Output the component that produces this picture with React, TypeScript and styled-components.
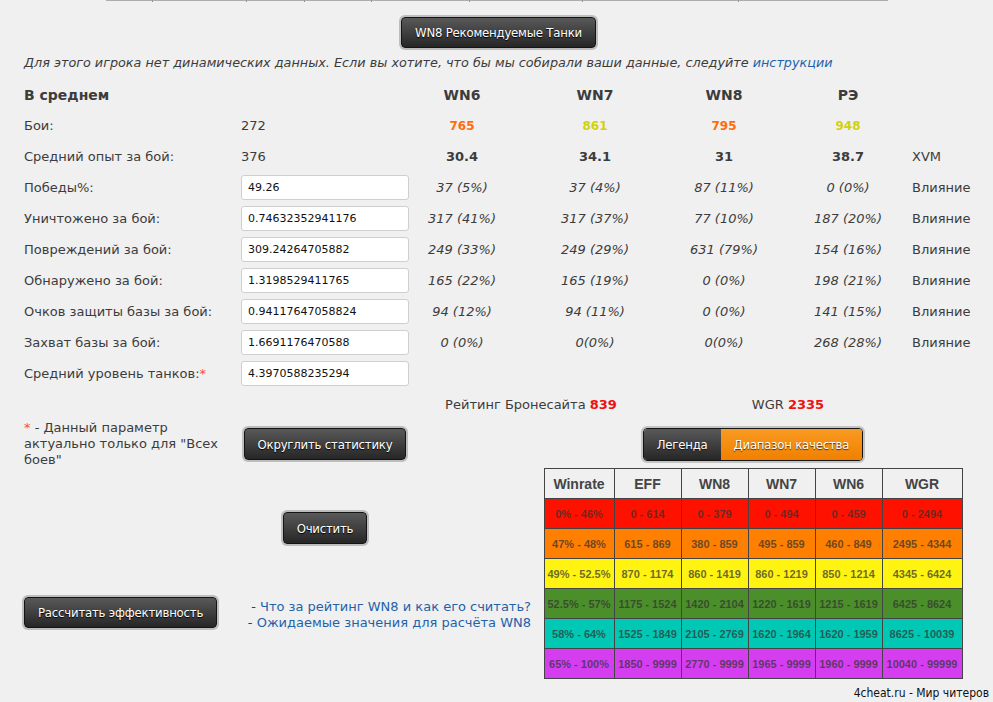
import styled, { createGlobalStyle } from "styled-components";

const GlobalStyle = createGlobalStyle`
  html, body {
    margin: 0;
    background: #f0f0f0;
  }
  body {
    font-family: "DejaVu Sans", Verdana, sans-serif;
    font-size: 13px;
    color: #3c3c3c;
  }
  * {
    box-sizing: border-box;
  }
`;

const tabEdges = [106, 153, 247, 305, 372, 470, 583, 739, 888];

const headers = ["WN6", "WN7", "WN8", "РЭ"];
const battles = [
  { value: "765", color: "#ff6c0a" },
  { value: "861", color: "#d2d20c" },
  { value: "795", color: "#ff6c0a" },
  { value: "948", color: "#d2d20c" },
];
const averages = ["30.4", "34.1", "31", "38.7"];

const rows = [
  { label: "Победы%:", value: "49.26", cells: ["37 (5%)", "37 (4%)", "87 (11%)", "0 (0%)"] },
  { label: "Уничтожено за бой:", value: "0.74632352941176", cells: ["317 (41%)", "317 (37%)", "77 (10%)", "187 (20%)"] },
  { label: "Повреждений за бой:", value: "309.24264705882", cells: ["249 (33%)", "249 (29%)", "631 (79%)", "154 (16%)"] },
  { label: "Обнаружено за бой:", value: "1.3198529411765", cells: ["165 (22%)", "165 (19%)", "0 (0%)", "198 (21%)"] },
  { label: "Очков защиты базы за бой:", value: "0.94117647058824", cells: ["94 (12%)", "94 (11%)", "0 (0%)", "141 (15%)"] },
  { label: "Захват базы за бой:", value: "1.6691176470588", cells: ["0 (0%)", "0(0%)", "0(0%)", "268 (28%)"] },
];

const legendHead = ["Winrate", "EFF", "WN8", "WN7", "WN6", "WGR"];
const legendRows = [
  { color: "#ff1100", cells: ["0% - 46%", "0 - 614", "0 - 379", "0 - 494", "0 - 459", "0 - 2494"] },
  { color: "#ff7f00", cells: ["47% - 48%", "615 - 869", "380 - 859", "495 - 859", "460 - 849", "2495 - 4344"] },
  { color: "#fff312", cells: ["49% - 52.5%", "870 - 1174", "860 - 1419", "860 - 1219", "850 - 1214", "4345 - 6424"] },
  { color: "#4b8f2a", cells: ["52.5% - 57%", "1175 - 1524", "1420 - 2104", "1220 - 1619", "1215 - 1619", "6425 - 8624"] },
  { color: "#00c8b4", cells: ["58% - 64%", "1525 - 1849", "2105 - 2769", "1620 - 1964", "1620 - 1959", "8625 - 10039"] },
  { color: "#d53ef0", cells: ["65% - 100%", "1850 - 9999", "2770 - 9999", "1965 - 9999", "1960 - 9999", "10040 - 99999"] },
];
const legendWidths = [70, 67, 67, 67, 67, 80];

export default function App() {
  return (
    <>
      <GlobalStyle />
      <Page>
        <TopRule>
          {tabEdges.slice(1).map((edge, i) => (
            <TabEdge key={edge} style={{ width: edge - tabEdges[i] }} />
          ))}
        </TopRule>

        <CenterRow>
          <DarkButton>WN8 Рекомендуемые Танки</DarkButton>
        </CenterRow>

        <Notice>
          Для этого игрока нет динамических данных. Если вы хотите, что бы мы собирали ваши данные, следуйте{" "}
          <Link>инструкции</Link>
        </Notice>

        <StatsGrid>
          <HeadLabel>В среднем</HeadLabel>
          <span />
          {headers.map((h) => (
            <HeadCell key={h}>{h}</HeadCell>
          ))}
          <span />

          <Label>Бои:</Label>
          <Plain>272</Plain>
          {battles.map((b) => (
            <RatingCell key={b.value} $color={b.color}>
              {b.value}
            </RatingCell>
          ))}
          <span />

          <Label>Средний опыт за бой:</Label>
          <Plain>376</Plain>
          {averages.map((a) => (
            <BoldCell key={a}>{a}</BoldCell>
          ))}
          <Plain>XVM</Plain>

          {rows.map((row) => (
            <Row key={row.label}>
              <Label>{row.label}</Label>
              <ValueInput defaultValue={row.value} />
              {row.cells.map((c, i) => (
                <ItalicCell key={i}>{c}</ItalicCell>
              ))}
              <Plain>Влияние</Plain>
            </Row>
          ))}

          <Label>
            Средний уровень танков:<Star>*</Star>
          </Label>
          <ValueInput defaultValue="4.3970588235294" />
          <Filler />

          <SiteRating $col={3}>
            Рейтинг Бронесайта <Red>839</Red>
          </SiteRating>
          <SiteRating $col={5}>
            WGR <Red>2335</Red>
          </SiteRating>
        </StatsGrid>

        <Bottom>
          <LeftColumn>
            <FootRow>
              <FootNote>
                <Star>*</Star> - Данный параметр актуально только для "Всех боев"
              </FootNote>
              <RoundSlot>
                <DarkButton>Округлить статистику</DarkButton>
                <ClearSlot>
                  <DarkButton>Очистить</DarkButton>
                </ClearSlot>
              </RoundSlot>
            </FootRow>
            <CalcRow>
              <DarkButton>Рассчитать эффективность</DarkButton>
              <Links>
                <div>
                  - <Link>Что за рейтинг WN8 и как его считать?</Link>
                </div>
                <div>
                  - <Link>Ожидаемые значения для расчёта WN8</Link>
                </div>
              </Links>
            </CalcRow>
          </LeftColumn>

          <RightColumn>
            <Toggle>
              <ToggleItem>Легенда</ToggleItem>
              <ToggleItem $active>Диапазон качества</ToggleItem>
            </Toggle>
            <Legend>
              <colgroup>
                {legendWidths.map((w, i) => (
                  <col key={i} style={{ width: w }} />
                ))}
              </colgroup>
              <thead>
                <tr>
                  {legendHead.map((h) => (
                    <LegendHead key={h}>{h}</LegendHead>
                  ))}
                </tr>
              </thead>
              <tbody>
                {legendRows.map((r) => (
                  <tr key={r.color}>
                    {r.cells.map((c) => (
                      <LegendCell key={c} $bg={r.color}>
                        {c}
                      </LegendCell>
                    ))}
                  </tr>
                ))}
              </tbody>
            </Legend>
          </RightColumn>
        </Bottom>

        <Watermark>4cheat.ru - Мир читеров</Watermark>
      </Page>
    </>
  );
}

const Page = styled.div`
  position: relative;
  width: 993px;
  height: 702px;
  overflow: hidden;
`;

const TopRule = styled.div`
  display: flex;
  padding-left: 106px;
  height: 2px;
`;

const TabEdge = styled.div`
  height: 2px;
  border-top: 1px solid #adadad;
  border-right: 1px solid #8e8e8e;
  &:last-child {
    border-right: none;
  }
`;

const CenterRow = styled.div`
  display: flex;
  justify-content: center;
  padding-left: 4px;
  margin-top: 15px;
`;

const DarkButton = styled.button`
  height: 31px;
  padding: 0 13px;
  border: 1px solid #141414;
  border-radius: 4px;
  background: linear-gradient(#595959, #262626);
  box-shadow: 0 0 0 2px #bdbdbd;
  color: #fff;
  font-family: "DejaVu Sans Condensed", "Liberation Sans Narrow", sans-serif;
  font-size: 13px;
  letter-spacing: -0.2px;
  text-shadow: 0 1px 1px #000;
  white-space: nowrap;
  cursor: pointer;
`;

const Notice = styled.p`
  margin: 7px 0 0 24px;
  font-size: 12.8px;
  font-style: italic;
  line-height: 16px;
`;

const Link = styled.a`
  color: #1f62aa;
  text-decoration: none;
  cursor: pointer;
`;

const StatsGrid = styled.div`
  display: grid;
  grid-template-columns: 217px 157px 128px 138px 120px 128px 1fr;
  grid-auto-rows: 31px;
  align-items: center;
  margin-top: 8px;
  padding-left: 24px;
`;

const Row = styled.div`
  display: contents;
`;

const HeadLabel = styled.div`
  font-size: 14px;
  font-weight: bold;
`;

const HeadCell = styled.div`
  text-align: center;
  font-size: 14px;
  font-weight: bold;
`;

const Label = styled.div`
  white-space: nowrap;
`;

const Plain = styled.div``;

const RatingCell = styled.div<{ $color: string }>`
  text-align: center;
  font-size: 12px;
  font-weight: bold;
  color: ${(p) => p.$color};
`;

const BoldCell = styled.div`
  text-align: center;
  font-size: 13px;
  font-weight: bold;
`;

const ItalicCell = styled.div`
  text-align: center;
  font-style: italic;
`;

const ValueInput = styled.input`
  width: 168px;
  height: 25px;
  padding: 0 6px;
  border: 1px solid #cfcfcf;
  border-radius: 3px;
  background: #fff;
  font-family: "DejaVu Sans", Verdana, sans-serif;
  font-size: 11px;
  color: #111;
`;

const Filler = styled.div`
  grid-column: 3 / -1;
`;

const Star = styled.span`
  color: #ff4a4a;
`;

const SiteRating = styled.div<{ $col: number }>`
  grid-column: ${(p) => p.$col} / span 2;
  text-align: center;
`;

const Red = styled.b`
  color: #ee1111;
`;

const Bottom = styled.div`
  display: flex;
  gap: 13px;
  padding-left: 24px;
`;

const LeftColumn = styled.div`
  width: 507px;
  display: flex;
  flex-direction: column;
`;

const FootRow = styled.div`
  display: grid;
  grid-template-columns: 219px auto;
  align-items: start;
`;

const FootNote = styled.div`
  width: 205px;
  line-height: 16px;
`;

const RoundSlot = styled.div`
  display: flex;
  flex-direction: column;
  align-items: center;
  width: 164px;
  padding-top: 8px;
  ${DarkButton} {
    height: 32px;
  }
`;

const ClearSlot = styled.div`
  margin-top: 52px;
`;

const CalcRow = styled.div`
  display: flex;
  justify-content: space-between;
  align-items: flex-start;
  margin-top: 53px;
`;

const Links = styled.div`
  text-align: right;
  line-height: 16px;
  padding-top: 2px;
`;

const RightColumn = styled.div`
  width: 418px;
  display: flex;
  flex-direction: column;
  align-items: center;
`;

const Toggle = styled.div`
  display: flex;
  margin-top: 8px;
  border: 1px solid #141414;
  border-radius: 4px;
  box-shadow: 0 0 0 2px #c4c4c4;
  overflow: hidden;
`;

const ToggleItem = styled.div<{ $active?: boolean }>`
  height: 31px;
  display: flex;
  align-items: center;
  padding: 0 13px;
  background: ${(p) =>
    p.$active ? "linear-gradient(#f99a22, #f08000)" : "linear-gradient(#595959, #262626)"};
  color: #fff;
  font-family: "DejaVu Sans Condensed", "Liberation Sans Narrow", sans-serif;
  font-size: 13px;
  letter-spacing: -0.2px;
  text-shadow: 0 1px 1px rgba(0, 0, 0, 0.7);
`;

const Legend = styled.table`
  margin-top: 7px;
  width: 418px;
  border-collapse: collapse;
  table-layout: fixed;
  font-family: "Liberation Sans", Arial, sans-serif;
`;

const LegendHead = styled.th`
  height: 30px;
  border: 1px solid #444;
  background: #f0f0f0;
  font-size: 14px;
  font-weight: bold;
  color: #444;
  text-align: center;
  padding: 0;
`;

const LegendCell = styled.td<{ $bg: string }>`
  height: 30px;
  border: 1px solid #444;
  background: ${(p) => p.$bg};
  font-size: 11px;
  font-weight: bold;
  color: rgba(50, 50, 50, 0.72);
  text-align: center;
  padding: 0;
  white-space: nowrap;
`;

const Watermark = styled.div`
  position: absolute;
  right: 4px;
  bottom: 2px;
  font-family: "DejaVu Sans Condensed", "Liberation Sans Narrow", sans-serif;
  font-size: 12px;
  color: #111;
`;
